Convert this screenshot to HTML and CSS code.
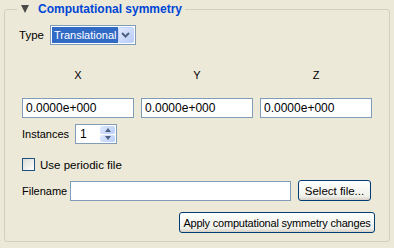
FILE: index.html
```html
<!DOCTYPE html>
<html lang="en">
<head>
    <meta charset="UTF-8">
    <title>Computational symmetry</title>
    <link rel="stylesheet" href="styles.css">
</head>
<body>
    <fieldset class="group">
        <legend class="group-title"><span class="collapse-arrow"></span>Computational symmetry</legend>

        <div class="type-row">
            <span class="label">Type</span>
            <div class="combo">
                <span class="combo-value">Translational</span>
                <span class="combo-button">
                    <svg width="9" height="6" viewBox="0 0 9 6"><path d="M1 1 L4.5 4.5 L8 1" fill="none" stroke="#4d6185" stroke-width="2"/></svg>
                </span>
            </div>
        </div>

        <div class="axis-labels">
            <span>X</span>
            <span>Y</span>
            <span>Z</span>
        </div>

        <div class="axis-fields">
            <div class="field">0.0000e+000</div>
            <div class="field">0.0000e+000</div>
            <div class="field">0.0000e+000</div>
        </div>

        <div class="instances-row">
            <span class="label">Instances</span>
            <div class="spin">
                <span class="spin-value">1</span>
                <span class="spin-buttons">
                    <span class="spin-up"></span>
                    <span class="spin-down"></span>
                </span>
            </div>
        </div>

        <label class="check-row">
            <span class="checkbox"></span>
            <span>Use periodic file</span>
        </label>

        <div class="file-row">
            <span class="label">Filename</span>
            <div class="field file-field"></div>
            <button class="xp-button select-button">Select file...</button>
        </div>

        <div class="apply-row">
            <button class="xp-button apply-button">Apply computational symmetry changes</button>
        </div>
    </fieldset>
</body>
</html>
```

FILE: styles.css
```css
:root {
    --bg-color: #ece9d8;
    --frame-color: #d0d0bf;
    --field-border: #7f9db9;
    --title-color: #0046d5;
    --select-bg: #316ac5;
    --button-border: #003c74;
}

* {
    box-sizing: border-box;
}

body {
    margin: 0;
    padding: 2px 4px 0 4px;
    width: 394px;
    height: 248px;
    background-color: var(--bg-color);
    font-family: "Liberation Sans", Arial, sans-serif;
    font-size: 11.5px;
    color: #000;
    overflow: hidden;
}

.group {
    width: 386px;
    height: 240px;
    margin: 0;
    padding: 0 0 0 17px;
    border: 1px solid var(--frame-color);
    border-radius: 3px;
}

.group-title {
    margin-left: -5px;
    padding: 0 3px 0 4px;
    height: 14px;
    line-height: 14px;
    font-size: 12px;
    font-weight: bold;
    color: var(--title-color);
    display: flex;
    align-items: center;
}

.collapse-arrow {
    width: 0;
    height: 0;
    border-left: 4.5px solid transparent;
    border-right: 4.5px solid transparent;
    border-top: 8px solid #4a4a4a;
    margin-right: 9px;
}

.label {
    line-height: 14px;
}

.type-row {
    display: flex;
    align-items: center;
    gap: 6px;
    margin-top: 9px;
    margin-left: -3px;
}

.combo {
    display: flex;
    width: 86px;
    height: 20px;
    border: 1px solid var(--field-border);
    background-color: #fff;
    padding: 1px;
}

.combo-value {
    flex: 1;
    background-color: var(--select-bg);
    color: #fff;
    font-size: 11px;
    line-height: 16px;
    padding-left: 2px;
    white-space: nowrap;
    overflow: hidden;
}

.combo-button {
    width: 16px;
    display: flex;
    align-items: center;
    justify-content: center;
    background: linear-gradient(135deg, #e0e9fd, #b8cdf8);
    border: 1px solid #c3d3fd;
    border-radius: 2px;
}

.axis-labels {
    display: grid;
    grid-template-columns: repeat(3, 112px);
    column-gap: 7px;
    margin-top: 23px;
    height: 14px;
    line-height: 14px;
    text-align: center;
    font-size: 11px;
}

.axis-fields {
    display: grid;
    grid-template-columns: repeat(3, 112px);
    column-gap: 7px;
    margin-top: 16px;
}

.field {
    height: 20px;
    border: 1px solid var(--field-border);
    background-color: #fff;
    padding-left: 3px;
    font-size: 12px;
    line-height: 18px;
}

.instances-row {
    display: flex;
    align-items: center;
    gap: 6px;
    margin-top: 6px;
    font-size: 11px;
}

.spin {
    display: flex;
    width: 42px;
    height: 20px;
    border: 1px solid var(--field-border);
    background-color: #fff;
    padding: 1px;
}

.spin-value {
    flex: 1;
    font-size: 12px;
    line-height: 16px;
    padding-left: 3px;
}

.spin-buttons {
    width: 15px;
    display: flex;
    flex-direction: column;
    gap: 1px;
}

.spin-up,
.spin-down {
    flex: 1;
    display: flex;
    align-items: center;
    justify-content: center;
    background: linear-gradient(135deg, #e0e9fd, #b8cdf8);
    border-radius: 2px;
}

.spin-up::after,
.spin-down::after {
    content: "";
    width: 0;
    height: 0;
    border-left: 3.5px solid transparent;
    border-right: 3.5px solid transparent;
}

.spin-up::after {
    border-bottom: 4px solid #4d6185;
}

.spin-down::after {
    border-top: 4px solid #4d6185;
}

.check-row {
    display: flex;
    align-items: center;
    gap: 5px;
    margin-top: 14px;
    height: 13px;
}

.checkbox {
    width: 13px;
    height: 13px;
    border: 1px solid #1c5180;
    background: linear-gradient(135deg, #dcdcd7, #fff);
}

.file-row {
    display: flex;
    align-items: center;
    margin-top: 9px;
    height: 21px;
    font-size: 11px;
}

.file-row .label {
    width: 48px;
}

.file-field {
    width: 221px;
}

.select-button {
    margin-left: 7px;
    width: 73px;
}

.xp-button {
    height: 21px;
    padding: 0 3px;
    border: 1px solid var(--button-border);
    border-radius: 3px;
    background: linear-gradient(#ffffff, #f0f0ea 80%, #d6d0c5);
    font-family: "Liberation Sans", Arial, sans-serif;
    font-size: 11.5px;
    color: #000;
}

.apply-button {
    width: 196px;
    font-size: 11px;
    letter-spacing: -0.2px;
    white-space: nowrap;
}

.apply-row {
    display: flex;
    justify-content: flex-end;
    width: 353px;
    margin-top: 11px;
}
```
